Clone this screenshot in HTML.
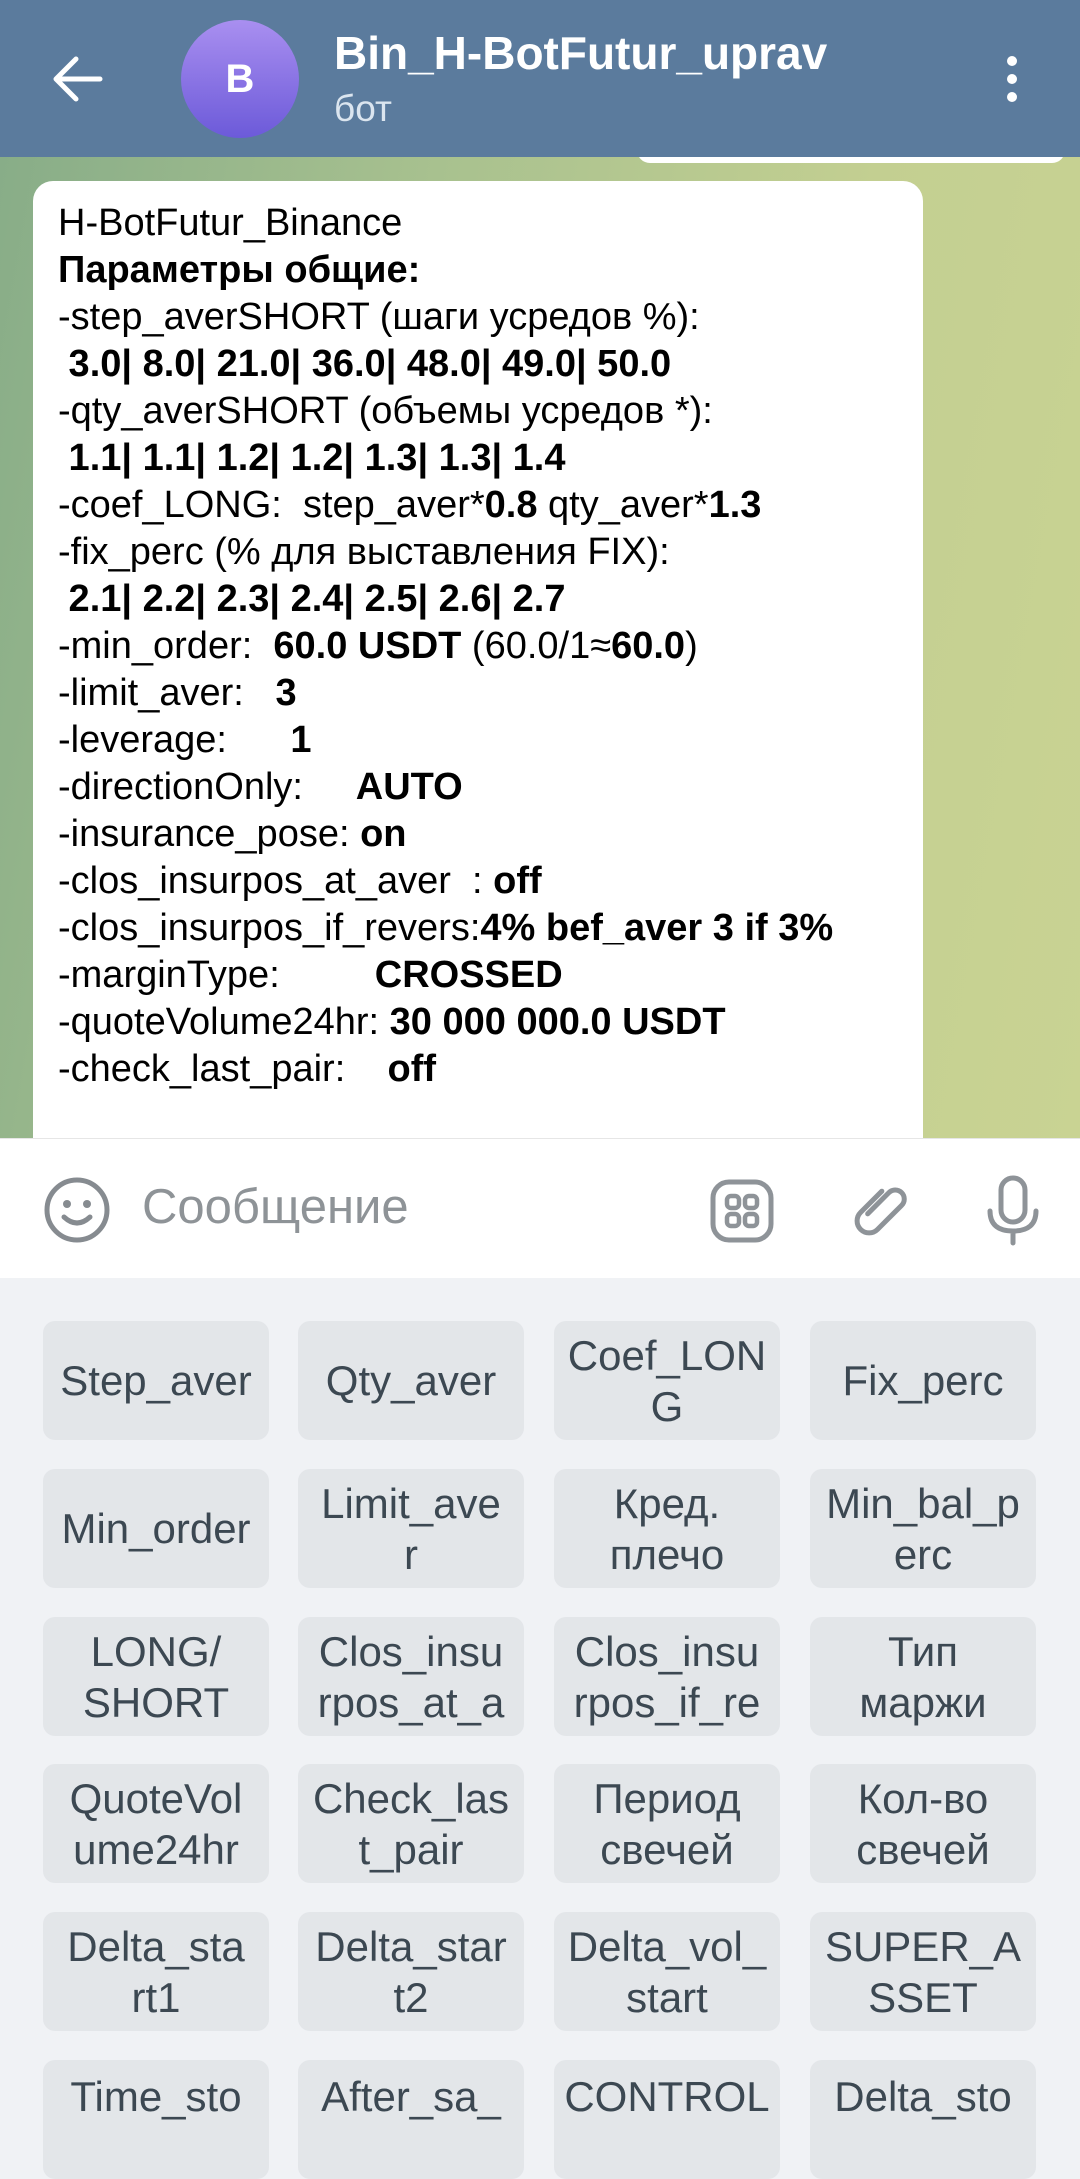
<!DOCTYPE html>
<html><head><meta charset="utf-8"><style>
*{margin:0;padding:0;box-sizing:border-box}
body{width:1080px;height:2124px;overflow:hidden;position:relative;font-family:"Liberation Sans","Noto Sans CJK SC",sans-serif;background:#f0f2f5}
.hdr{position:absolute;left:0;top:0;width:1080px;height:157px;background:#5b7b9d;z-index:3}
.av{position:absolute;left:181px;top:20px;width:118px;height:118px;border-radius:50%;background:linear-gradient(#a98ff0,#6c5ad9);color:#fff;font-size:40px;font-weight:bold;text-align:center;line-height:118px}
.title{position:absolute;left:334px;top:26px;color:#fff;font-size:46px;font-weight:bold;white-space:nowrap;width:500px;overflow:hidden}
.sub{position:absolute;left:334px;top:88px;color:#dbe5ef;font-size:37px}
.chat{position:absolute;left:0;top:157px;width:1080px;height:981px;background:linear-gradient(100deg,#88ad88 0%,#a8c18f 35%,#c3cf91 70%,#c9d393 100%);overflow:hidden}
.prev{position:absolute;left:637px;top:-20px;width:428px;height:26px;background:#fff;border-radius:14px}
.bub{position:absolute;left:33px;top:24px;width:890px;height:1000px;background:#fff;border-radius:20px}
.txt{position:absolute;left:58px;top:200px;font-size:38px;line-height:47px;white-space:pre;color:#000;z-index:2}
.inp{position:absolute;left:0;top:1138px;width:1080px;height:140px;background:#fff;border-top:1px solid #e6e6e6}
.ph{position:absolute;left:142px;top:40px;font-size:49px;color:#8e9397}
.kb{position:absolute;left:0;top:1278px;width:1080px;height:846px;background:#f0f2f5}
.b{position:absolute;width:226px;height:119px;background:#e3e6e9;border-radius:12px;color:#3c4852;font-size:42px;line-height:51px;display:flex;align-items:center;justify-content:center;text-align:center;white-space:pre}
</style></head><body>
<div class="hdr">
<svg style="position:absolute;left:50px;top:55px" width="54" height="48" viewBox="0 0 54 48"><path d="M50 24H6M26 4L6 24l20 20" stroke="#fff" stroke-width="5" fill="none" stroke-linecap="round" stroke-linejoin="round"/></svg>
<div class="av">B</div>
<div class="title">Bin_H-BotFutur_uprav</div>
<div class="sub">бот</div>
<svg style="position:absolute;left:1002px;top:55px" width="20" height="50"><circle cx="10" cy="6" r="5" fill="#fff"/><circle cx="10" cy="24" r="5" fill="#fff"/><circle cx="10" cy="42" r="5" fill="#fff"/></svg>
</div>
<div class="chat"><div class="prev"></div><div class="bub"></div></div>
<div class="txt">H-BotFutur_Binance
<b>Параметры общие:</b>
-step_averSHORT (шаги усредов %):
<b> 3.0| 8.0| 21.0| 36.0| 48.0| 49.0| 50.0</b>
-qty_averSHORT (объемы усредов *):
<b> 1.1| 1.1| 1.2| 1.2| 1.3| 1.3| 1.4</b>
-coef_LONG:  step_aver*<b>0.8</b> qty_aver*<b>1.3</b>
-fix_perc (% для выставления FIX):
<b> 2.1| 2.2| 2.3| 2.4| 2.5| 2.6| 2.7</b>
-min_order:  <b>60.0 USDT</b> (60.0/1≈<b>60.0</b>)
-limit_aver:   <b>3</b>
-leverage:      <b>1</b>
-directionOnly:     <b>AUTO</b>
-insurance_pose: <b>on</b>
-clos_insurpos_at_aver  : <b>off</b>
-clos_insurpos_if_revers:<b>4% bef_aver 3 if 3%</b>
-marginType:         <b>CROSSED</b>
-quoteVolume24hr: <b>30 000 000.0 USDT</b>
-check_last_pair:    <b>off</b></div>
<div class="inp">
<svg style="position:absolute;left:43px;top:37px" width="68" height="68" viewBox="0 0 68 68"><circle cx="34" cy="34" r="30" stroke="#868b90" stroke-width="5" fill="none"/><circle cx="24" cy="28" r="4" fill="#868b90"/><circle cx="44" cy="28" r="4" fill="#868b90"/><path d="M21 41q13 12 26 0" stroke="#868b90" stroke-width="5" fill="none" stroke-linecap="round"/></svg>
<div class="ph">Сообщение</div>
<svg style="position:absolute;left:710px;top:40px" width="64" height="64" viewBox="0 0 64 64"><rect x="3" y="3" width="58" height="58" rx="16" stroke="#8e9398" stroke-width="5" fill="none"/><rect x="17" y="17" width="12" height="12" rx="4" stroke="#8e9398" stroke-width="4.5" fill="none"/><rect x="35" y="17" width="12" height="12" rx="4" stroke="#8e9398" stroke-width="4.5" fill="none"/><rect x="17" y="35" width="12" height="12" rx="4" stroke="#8e9398" stroke-width="4.5" fill="none"/><rect x="35" y="35" width="12" height="12" rx="4" stroke="#8e9398" stroke-width="4.5" fill="none"/></svg>
<svg style="position:absolute;left:846px;top:38px" width="66" height="68" viewBox="0 0 66 68"><g transform="translate(33,34) rotate(45)"><path d="M-12 -16V14a12 12 0 0 0 24 0V-20a9 9 0 0 0 -18 0V10" stroke="#8e9398" stroke-width="5" fill="none" stroke-linecap="round"/></g></svg>
<svg style="position:absolute;left:986px;top:36px" width="54" height="72" viewBox="0 0 54 72"><rect x="15" y="3" width="24" height="44" rx="12" stroke="#8e9398" stroke-width="5" fill="none"/><path d="M4 36q0 20 23 20q23 0 23-20M27 56v12" stroke="#8e9398" stroke-width="5" fill="none" stroke-linecap="round"/></svg>
</div>
<div class="kb"></div>
<div class="b" style="left:43px;top:1321px">Step_aver</div>
<div class="b" style="left:298px;top:1321px">Qty_aver</div>
<div class="b" style="left:554px;top:1321px">Coef_LON
G</div>
<div class="b" style="left:810px;top:1321px">Fix_perc</div>
<div class="b" style="left:43px;top:1469px">Min_order</div>
<div class="b" style="left:298px;top:1469px">Limit_ave
r</div>
<div class="b" style="left:554px;top:1469px">Кред.
плечо</div>
<div class="b" style="left:810px;top:1469px">Min_bal_p
erc</div>
<div class="b" style="left:43px;top:1617px">LONG/
SHORT</div>
<div class="b" style="left:298px;top:1617px">Clos_insu
rpos_at_a</div>
<div class="b" style="left:554px;top:1617px">Clos_insu
rpos_if_re</div>
<div class="b" style="left:810px;top:1617px">Тип
маржи</div>
<div class="b" style="left:43px;top:1764px">QuoteVol
ume24hr</div>
<div class="b" style="left:298px;top:1764px">Check_las
t_pair</div>
<div class="b" style="left:554px;top:1764px">Период
свечей</div>
<div class="b" style="left:810px;top:1764px">Кол-во
свечей</div>
<div class="b" style="left:43px;top:1912px">Delta_sta
rt1</div>
<div class="b" style="left:298px;top:1912px">Delta_star
t2</div>
<div class="b" style="left:554px;top:1912px">Delta_vol_
start</div>
<div class="b" style="left:810px;top:1912px">SUPER_A
SSET</div>
<div class="b" style="left:43px;top:2060px;align-items:flex-start;padding-top:11px">Time_sto</div>
<div class="b" style="left:298px;top:2060px;align-items:flex-start;padding-top:11px">After_sa_</div>
<div class="b" style="left:554px;top:2060px;align-items:flex-start;padding-top:11px">CONTROL</div>
<div class="b" style="left:810px;top:2060px;align-items:flex-start;padding-top:11px">Delta_sto</div>
</body></html>
